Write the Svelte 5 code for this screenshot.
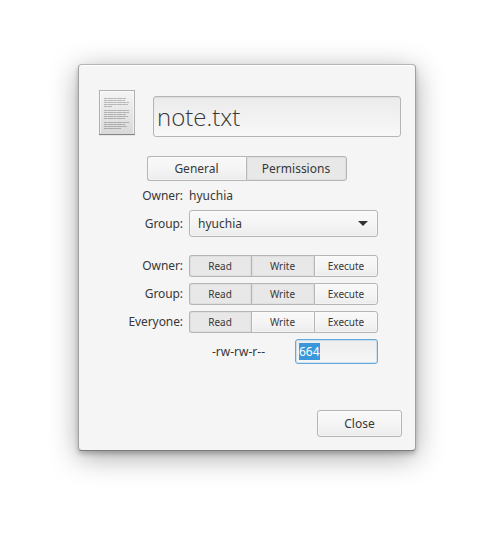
<script>
  let tab = $state('Permissions');
  const tabs = ['General', 'Permissions'];
  const actions = ['Read', 'Write', 'Execute'];
  let rows = $state([
    { who: 'Owner', on: [true, true, false] },
    { who: 'Group', on: [true, true, false] },
    { who: 'Everyone', on: [true, false, false] }
  ]);
  const modeText = $derived(
    '-' + rows.map((r) => r.on.map((v, i) => (v ? 'rwx'[i] : '-')).join('')).join('')
  );
  const octal = $derived(
    rows.map((r) => r.on.reduce((sum, v, i) => sum + (v ? 4 >> i : 0), 0)).join('')
  );
  const lines = [
    [8, 22], [10, 21], [12, 25], [14, 24], [16, 8],
    [20, 25], [22, 25], [24, 22], [26, 24], [28, 21],
    [32, 25], [34, 21], [36, 23], [38, 17]
  ];
</script>

<main>
  <section class="dialog">
    <header>
      <svg class="file" width="36" height="46" viewBox="0 0 36 46">
        <defs>
          <linearGradient id="paper" x1="0" y1="0" x2="0" y2="1">
            <stop offset="0" stop-color="#f5f5f5" />
            <stop offset="1" stop-color="#d8d8d8" />
          </linearGradient>
        </defs>
        <rect x="0" y="45" width="36" height="1" fill="#000" opacity=".06" />
        <rect x=".5" y=".5" width="35" height="44" fill="url(#paper)" stroke="#b0b0b0" />
        <path d="M1.5 43.5V1.5H34.5V43.5" fill="none" stroke="#fff" stroke-opacity=".6" />
        <path d="M0 44.5H36" stroke="#868686" />
        {#each lines as [y, w]}
          <path d="M5 {y + 0.5}h{w}" stroke="#000" stroke-opacity=".23" stroke-dasharray="3.4 .4 5.2 .3" />
        {/each}
      </svg>
      <div class="name">note.txt</div>
    </header>

    <div class="tabs">
      {#each tabs as t}
        <button class:on={tab === t} onclick={() => (tab = t)}>{t}</button>
      {/each}
    </div>

    <div class="row owner"><span class="label">Owner:</span><span>hyuchia</span></div>
    <div class="row group">
      <span class="label">Group:</span>
      <button class="combo">
        hyuchia
        <svg width="10" height="5" viewBox="0 0 10 5"><path d="M0 0H10L5 5Z" fill="#333" /></svg>
      </button>
    </div>

    {#each rows as row}
      <div class="row perm">
        <span class="label">{row.who}:</span>
        <div class="toggles">
          {#each actions as action, i}
            <button class:on={row.on[i]} onclick={() => (row.on[i] = !row.on[i])}>{action}</button>
          {/each}
        </div>
      </div>
    {/each}

    <div class="mode">
      <span class="text">{modeText}</span>
      <div class="octal"><span>{octal}</span></div>
    </div>

    <footer><button class="close">Close</button></footer>
  </section>
</main>

<style>
  :global(body) {
    background: #fff;
  }
  main {
    box-sizing: border-box;
    width: 494px;
    height: 543px;
    padding: 64px 78px 0;
    overflow: hidden;
    font: 12px/16px 'Noto Sans', 'Open Sans', sans-serif;
    color: #383838;
  }
  .dialog {
    box-sizing: border-box;
    width: 338px;
    height: 387px;
    padding: 25px 13px 13px 20px;
    display: flex;
    flex-direction: column;
    border: 1px solid;
    border-color: #b4b4b4 #a0a0a0 #7c7c7c;
    border-radius: 4px;
    background: #f5f5f5;
    box-shadow:
      inset 0 1px #fff,
      0 3px 5px rgba(0, 0, 0, 0.22),
      0 6px 28px rgba(0, 0, 0, 0.34);
  }
  header {
    display: flex;
    gap: 18px;
    height: 66px;
    flex: none;
  }
  .name {
    box-sizing: border-box;
    width: 248px;
    height: 41px;
    margin-top: 6px;
    padding-left: 3px;
    border: 1px solid #b5b5b5;
    border-radius: 3px;
    background: linear-gradient(#ebebeb, #f8f8f8);
    box-shadow: inset 0 1px 1px rgba(0, 0, 0, 0.06);
    font: 300 24px/39px 'Open Sans', 'Noto Sans', sans-serif;
  }
  button {
    box-sizing: border-box;
    margin: 0;
    padding: 0;
    border: 1px solid #b5b5b5;
    border-radius: 3px;
    background: linear-gradient(#f9f9f9, #f4f4f4 55%, #ececec);
    box-shadow: inset 0 0 0 1px rgba(255, 255, 255, 0.35);
    font: inherit;
    color: inherit;
  }
  button.on {
    background: #e8e8e8;
    box-shadow: inset 0 0 1px 1px rgba(0, 0, 0, 0.04);
  }
  .tabs {
    display: flex;
    width: 200px;
    height: 25px;
    margin-left: 48px;
    flex: none;
  }
  .tabs button {
    padding-right: 1px;
  }
  .tabs button:first-child,
  .toggles button:first-child {
    border-right: 0;
    border-radius: 3px 0 0 3px;
  }
  .tabs button:last-child,
  .toggles button:last-child {
    border-radius: 0 3px 3px 0;
  }
  .tabs button:first-child {
    width: 99px;
  }
  .tabs button:last-child {
    width: 101px;
  }
  .row {
    display: flex;
    align-items: center;
    gap: 6px;
    flex: none;
  }
  .label {
    width: 84px;
    text-align: right;
    letter-spacing: -0.08px;
  }
  .owner {
    height: 16px;
    margin-top: 7px;
  }
  .group {
    height: 27px;
    margin: 6px 0 18px;
  }
  .combo {
    display: flex;
    align-items: center;
    justify-content: space-between;
    width: 189px;
    height: 27px;
    padding: 0 9px 0 8px;
  }
  .perm {
    height: 22px;
    margin-bottom: 6px;
  }
  .toggles {
    display: flex;
    width: 189px;
    height: 22px;
    font-size: 10px;
  }
  .toggles button {
    width: 62px;
    padding-right: 1px;
  }
  .toggles button:nth-child(2) {
    width: 63px;
    border-right: 0;
    border-radius: 0;
  }
  .toggles button:last-child {
    width: 64px;
    padding-right: 0;
  }
  .mode {
    display: flex;
    justify-content: space-between;
    align-items: center;
    width: 166px;
    height: 25px;
    margin-left: 113px;
    flex: none;
  }
  .octal {
    box-sizing: border-box;
    width: 83px;
    height: 25px;
    padding: 3px;
    border: 1px solid #62a9dc;
    border-radius: 3px;
    background: linear-gradient(#ededed, #f6f6f6);
    box-shadow: inset 0 0 0 1px rgba(98, 169, 224, 0.25);
  }
  .octal span {
    display: inline-block;
    height: 17px;
    line-height: 17px;
    background: #3a97db;
    color: #fff;
  }
  footer {
    display: flex;
    justify-content: flex-end;
    margin-top: auto;
  }
  .close {
    width: 85px;
    height: 27px;
  }
</style>
